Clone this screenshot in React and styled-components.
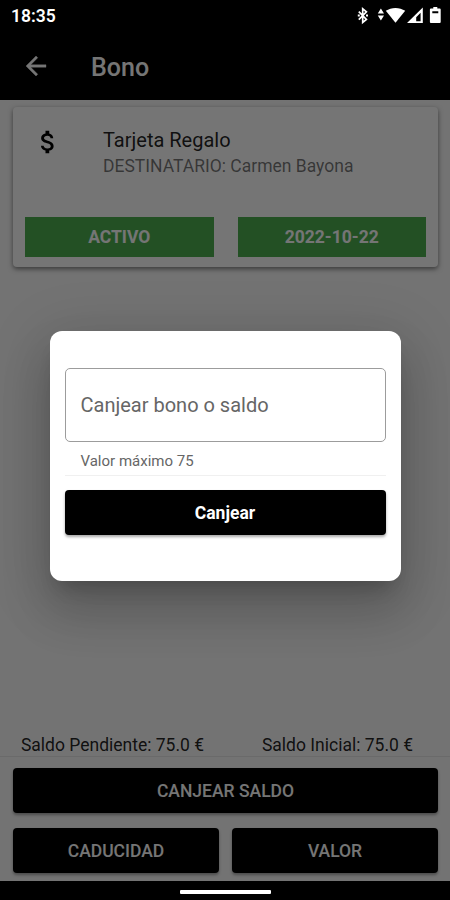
import React from 'react';
import styled, { createGlobalStyle } from 'styled-components';

const GlobalStyle = createGlobalStyle`
  * {
    box-sizing: border-box;
  }

  body {
    margin: 0;
    background: #000;
    font-family: Roboto, 'Liberation Sans', sans-serif;
  }
`;

const Screen = styled.div`
  position: relative;
  display: flex;
  flex-direction: column;
  width: 450px;
  height: 900px;
  overflow: hidden;
  background: #fafafa;
`;

const StatusBar = styled.div`
  position: relative;
  z-index: 2;
  display: flex;
  align-items: center;
  justify-content: space-between;
  height: 33px;
  padding: 0 7px 0 11px;
  background: #000;
  color: #fff;
`;

const Clock = styled.span`
  font-size: 17.5px;
  font-weight: 600;
  line-height: 33px;
`;

const StatusIcons = styled.svg`
  display: block;
  width: 86px;
  height: 33px;
`;

const AppBar = styled.header`
  display: flex;
  align-items: flex-start;
  gap: 40px;
  height: 67px;
  padding: 17.5px 0 0 21px;
  background: #000;
  color: #fff;
`;

const Icon = styled.svg`
  display: block;
  flex: none;
  width: 30px;
  height: 30px;
  fill: currentColor;
`;

const AppTitle = styled.h1`
  margin: 0;
  padding-top: 2.5px;
  font-size: 25px;
  font-weight: 500;
  line-height: 30px;
`;

const Content = styled.main`
  flex: 1;
  padding: 7px 12px 0 13px;
`;

const Card = styled.section`
  display: flex;
  flex-direction: column;
  justify-content: space-between;
  height: 160px;
  padding: 20px 12px 10px 12px;
  border-radius: 4px;
  background: #fff;
  box-shadow: 0 2px 5px rgba(0, 0, 0, 0.5);
`;

const CardHeader = styled.div`
  display: flex;
  gap: 40px;
  padding: 0 8px;
`;

const CardTitle = styled.div`
  margin-top: 1px;
  color: rgba(0, 0, 0, 0.87);
  font-size: 20px;
  line-height: 24px;
`;

const CardSubtitle = styled.div`
  margin-top: 2px;
  color: rgba(0, 0, 0, 0.54);
  font-size: 17.5px;
  line-height: 24px;
`;

const Tags = styled.div`
  display: grid;
  grid-template-columns: 1fr 1fr;
  gap: 24px;
`;

const Tag = styled.div`
  height: 40px;
  background: #4caf50;
  color: #fff;
  font-size: 17.5px;
  font-weight: 700;
  line-height: 41px;
  text-align: center;
`;

const Balances = styled.div`
  display: grid;
  grid-template-columns: 1fr 1fr;
  height: 24px;
  border-bottom: 1px solid #e8e8e8;
  color: rgba(0, 0, 0, 0.87);
  font-size: 17.5px;
  line-height: 25px;
  text-align: center;
`;

const Actions = styled.div`
  display: grid;
  grid-template-columns: 1fr 1fr;
  gap: 15px 13px;
  padding: 11px 12px 8px 13px;
`;

const Button = styled.button`
  grid-column: ${({ $wide }) => ($wide ? '1 / -1' : 'auto')};
  display: block;
  width: 100%;
  height: 45px;
  padding: 2px 0 0;
  border: 0;
  border-radius: 4px;
  background: #000;
  color: #fff;
  font-family: inherit;
  font-size: 17.5px;
  font-weight: ${({ $weight }) => $weight || 500};
  line-height: 43px;
  box-shadow: 0 2px 3px rgba(0, 0, 0, 0.35);
`;

const NavigationBar = styled.div`
  position: relative;
  z-index: 2;
  height: 19px;
  padding-top: 9px;
  background: #000;
`;

const HomePill = styled.div`
  width: 91px;
  height: 4px;
  margin-left: 180px;
  border-radius: 1px;
  background: #fff;
`;

const Scrim = styled.div`
  position: absolute;
  inset: 0;
  z-index: 1;
  display: flex;
  flex-direction: column;
  align-items: center;
  padding-top: 330.5px;
  background: rgba(0, 0, 0, 0.54);
`;

const Dialog = styled.div`
  width: 351px;
  height: 250px;
  padding: 37.5px 15px 0;
  border-radius: 12px;
  background: #fff;
  box-shadow: 0 14px 19px -9px rgba(0, 0, 0, 0.2),
    0 30px 47px 4px rgba(0, 0, 0, 0.14), 0 11px 57px 10px rgba(0, 0, 0, 0.12);
`;

const Field = styled.div`
  height: 74px;
  padding-left: 15px;
  border: 1px solid #9c9c9c;
  border-radius: 5px;
  color: #666;
  font-size: 20px;
  line-height: 72px;
`;

const Helper = styled.div`
  height: 34px;
  margin-bottom: 14px;
  padding: 9px 0 0 16px;
  border-bottom: 1px solid #f0f0f0;
  color: #666;
  font-size: 15px;
  line-height: 20px;
`;

const App = () => {
  return (
    <>
      <GlobalStyle />
      <Screen>
        <StatusBar>
          <Clock>18:35</Clock>
          <StatusIcons viewBox="0 0 86 33" fill="#fff">
            <path
              d="M1.8 11.6 9.4 19.4 5.7 22.4V8.8L9.4 11.8 1.8 19.6"
              fill="none"
              stroke="#fff"
              strokeWidth="1.7"
            />
            <path d="M0.8 14.6h2v2h-2zM9 14.6h2v2H9z" />
            <path d="M20.8 13.6 23.9 8.6l3.1 5zM20.8 15.6h6.2L23.9 20.4z" />
            <path d="M28.8 10.8C34.3 6.9 42.6 6.9 48.2 10.8L38.5 22.8z" />
            <path d="M65.8 7.6V23H50zM59.2 21.2h4.4V12.8l-4.4 4.4z" fillRule="evenodd" />
            <path
              d="M76.3 7h4v1.6h2.4q1 0 1 1V22q0 1-1 1h-8.8q-1 0-1-1V9.6q0-1 1-1h2.4zM75.3 11.2v2h6v-2z"
              fillRule="evenodd"
            />
          </StatusIcons>
        </StatusBar>

        <AppBar>
          <Icon viewBox="0 0 24 24" stroke="currentColor" strokeWidth="0.3">
            <path d="M20 11H7.83l5.59-5.59L12 4l-8 8 8 8 1.41-1.41L7.83 13H20v-2z" />
          </Icon>
          <AppTitle>Bono</AppTitle>
        </AppBar>

        <Content>
          <Card>
            <CardHeader>
              <Icon viewBox="0 0 24 24">
                <path d="M11.8 10.9c-2.27-.59-3-1.2-3-2.15 0-1.09 1.01-1.85 2.7-1.85 1.78 0 2.44.85 2.5 2.1h2.21c-.07-1.72-1.12-3.3-3.21-3.81V3h-3v2.16c-1.94.42-3.5 1.68-3.5 3.61 0 2.31 1.91 3.46 4.7 4.13 2.5.6 3 1.48 3 2.41 0 .69-.49 1.79-2.7 1.79-2.06 0-2.87-.92-2.98-2.1h-2.2c.12 2.19 1.76 3.42 3.68 3.83V21h3v-2.15c1.95-.37 3.5-1.5 3.5-3.55 0-2.84-2.43-3.81-4.7-4.4z" />
              </Icon>
              <div>
                <CardTitle>Tarjeta Regalo</CardTitle>
                <CardSubtitle>DESTINATARIO: Carmen Bayona</CardSubtitle>
              </div>
            </CardHeader>
            <Tags>
              <Tag>ACTIVO</Tag>
              <Tag>2022-10-22</Tag>
            </Tags>
          </Card>
        </Content>

        <Balances>
          <span>Saldo Pendiente: 75.0 €</span>
          <span>Saldo Inicial: 75.0 €</span>
        </Balances>
        <Actions>
          <Button $wide>CANJEAR SALDO</Button>
          <Button>CADUCIDAD</Button>
          <Button>VALOR</Button>
        </Actions>
        <NavigationBar>
          <HomePill />
        </NavigationBar>

        <Scrim>
          <Dialog>
            <Field>Canjear bono o saldo</Field>
            <Helper>Valor máximo 75</Helper>
            <Button $weight={700}>Canjear</Button>
          </Dialog>
        </Scrim>
      </Screen>
    </>
  );
};

export default App;
